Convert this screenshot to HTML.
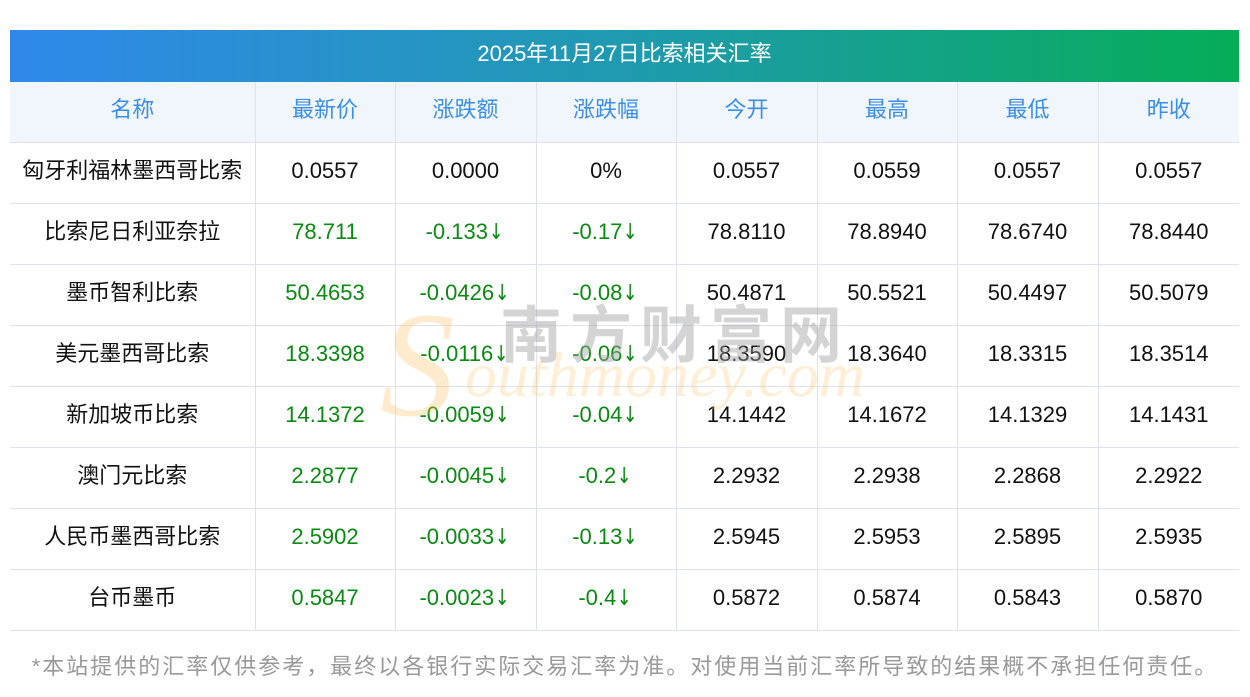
<!DOCTYPE html>
<html><head><meta charset="utf-8"><style>
body{margin:0;background:#fff;width:1250px;height:697px;overflow:hidden;position:relative;font-family:"Liberation Sans","Noto Sans CJK SC",sans-serif;}
.bar{position:absolute;left:10px;top:30px;width:1229px;height:52px;background:linear-gradient(90deg,#3088ea,#1f9ab0 50%,#06ad57);color:#fff;font-size:22px;text-align:center;line-height:48px;}
table{position:absolute;left:10px;top:82px;border-collapse:collapse;table-layout:fixed;width:1229px;font-size:22px;}
tr{height:61px;}
td{height:57px;line-height:26px;border:1px solid #dfe1ec;text-align:center;padding:0 0 3px 0;color:#111;overflow:hidden;white-space:nowrap;}
tr td:first-child{border-left:none}
tr td:last-child{border-right:none}
tr:first-child{height:60px;}
tr:first-child td{height:56px;border-top:none;background:#f1f6fd;color:#3b8ee6;}
.g{color:#0a8a12}
.a{display:inline-block;line-height:0;font-family:"DejaVu Sans",sans-serif;font-size:22px;transform:scaleX(0.8);margin-left:-1px;}
.note{position:absolute;left:0;width:1250px;top:649px;text-align:center;font-size:22px;letter-spacing:2px;color:#999;white-space:nowrap;}
.wm1{position:absolute;left:500px;top:285px;font-size:62px;font-weight:bold;color:rgba(160,160,160,.45);letter-spacing:8px;font-family:"Noto Sans CJK SC",sans-serif;}
.wm2{position:absolute;left:465px;top:338px;font-size:64px;font-style:italic;color:rgba(253,200,120,.3);font-family:"Liberation Serif",serif;}
.wmS{position:absolute;left:380px;top:290px;font-size:150px;font-style:italic;color:rgba(253,190,90,.3);font-family:"Liberation Serif",serif;line-height:150px;}
</style></head><body>
<div class="bar">2025年11月27日比索相关汇率</div>
<table>
<colgroup><col style="width:245px"><col style="width:140px"><col style="width:141px"><col style="width:140px"><col style="width:141px"><col style="width:140px"><col style="width:141px"><col style="width:141px"></colgroup>
<tr><td>名称</td><td>最新价</td><td>涨跌额</td><td>涨跌幅</td><td>今开</td><td>最高</td><td>最低</td><td>昨收</td></tr>
<tr><td>匈牙利福林墨西哥比索</td><td>0.0557</td><td>0.0000</td><td>0%</td><td>0.0557</td><td>0.0559</td><td>0.0557</td><td>0.0557</td></tr>
<tr><td>比索尼日利亚奈拉</td><td class="g">78.711</td><td class="g">-0.133<span class="a">↓</span></td><td class="g">-0.17<span class="a">↓</span></td><td>78.8110</td><td>78.8940</td><td>78.6740</td><td>78.8440</td></tr>
<tr><td>墨币智利比索</td><td class="g">50.4653</td><td class="g">-0.0426<span class="a">↓</span></td><td class="g">-0.08<span class="a">↓</span></td><td>50.4871</td><td>50.5521</td><td>50.4497</td><td>50.5079</td></tr>
<tr><td>美元墨西哥比索</td><td class="g">18.3398</td><td class="g">-0.0116<span class="a">↓</span></td><td class="g">-0.06<span class="a">↓</span></td><td>18.3590</td><td>18.3640</td><td>18.3315</td><td>18.3514</td></tr>
<tr><td>新加坡币比索</td><td class="g">14.1372</td><td class="g">-0.0059<span class="a">↓</span></td><td class="g">-0.04<span class="a">↓</span></td><td>14.1442</td><td>14.1672</td><td>14.1329</td><td>14.1431</td></tr>
<tr><td>澳门元比索</td><td class="g">2.2877</td><td class="g">-0.0045<span class="a">↓</span></td><td class="g">-0.2<span class="a">↓</span></td><td>2.2932</td><td>2.2938</td><td>2.2868</td><td>2.2922</td></tr>
<tr><td>人民币墨西哥比索</td><td class="g">2.5902</td><td class="g">-0.0033<span class="a">↓</span></td><td class="g">-0.13<span class="a">↓</span></td><td>2.5945</td><td>2.5953</td><td>2.5895</td><td>2.5935</td></tr>
<tr><td>台币墨币</td><td class="g">0.5847</td><td class="g">-0.0023<span class="a">↓</span></td><td class="g">-0.4<span class="a">↓</span></td><td>0.5872</td><td>0.5874</td><td>0.5843</td><td>0.5870</td></tr>
</table>
<div class="wmS">S</div>
<div class="wm1">南方财富网</div>
<div class="wm2">outhmoney.com</div>
<div class="note">*本站提供的汇率仅供参考，最终以各银行实际交易汇率为准。对使用当前汇率所导致的结果概不承担任何责任。</div>
</body></html>
